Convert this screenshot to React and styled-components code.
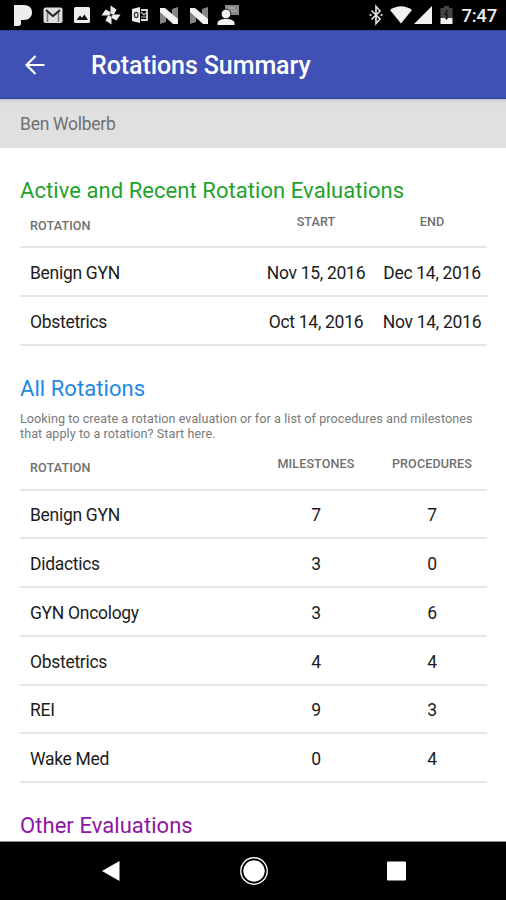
import React from "react";
import styled, { createGlobalStyle } from "styled-components";

const GlobalStyle = createGlobalStyle`
  * {
    box-sizing: border-box;
  }
  body {
    margin: 0;
    font-family: Roboto, "Noto Sans", sans-serif;
    background: #fff;
  }
`;

const Screen = styled.div`
  width: 506px;
  height: 900px;
  display: flex;
  flex-direction: column;
  overflow: hidden;
`;

const StatusBar = styled.div`
  height: 30px;
  flex: none;
  display: flex;
  justify-content: space-between;
  align-items: center;
  padding: 0 9px 0 13px;
  background: #000;
  color: #eee;
`;

const IconGroup = styled.div`
  display: flex;
  align-items: center;
`;

const StatusIcon = styled.svg`
  display: block;
  height: 24px;
  width: ${(props) => props.$width}px;
  margin-right: ${(props) => props.$gap || 0}px;
`;

const Clock = styled.span`
  font-size: 18.5px;
  font-weight: 500;
  line-height: 24px;
  letter-spacing: -0.2px;
  padding-top: 2px;
`;

const AppBar = styled.header`
  height: 69px;
  flex: none;
  display: flex;
  align-items: center;
  padding: 0 25px;
  background: #3f51b5;
  border-top: 1px solid #33439b;
  border-bottom: 1px solid #2c419f;
`;

const BackArrow = styled.svg`
  width: 20px;
  height: 20px;
  margin-right: 46px;
`;

const Title = styled.h1`
  margin: 0;
  padding-top: 3px;
  color: #fff;
  font-size: 25px;
  font-weight: 500;
  line-height: 30px;
  letter-spacing: -0.08px;
`;

const UserBar = styled.div`
  height: 49px;
  flex: none;
  padding: 0 20px;
  color: #707070;
  font-size: 17.5px;
  line-height: 50px;
  letter-spacing: -0.27px;
  background: linear-gradient(#c8c8c8, #dedede 4px, #e0e0e0 8px);
`;

const Content = styled.main`
  flex: 1;
  min-height: 0;
  overflow: hidden;
  padding: 29px 19px 0 20px;
  border-bottom: 1px solid #8a8a8a;
`;

const Section = styled.section`
  margin-bottom: 29px;
`;

const Heading = styled.h2`
  margin: 0;
  color: ${(props) => props.$color};
  font-size: 22px;
  font-weight: 400;
  line-height: 28px;
  letter-spacing: 0.06px;
  white-space: nowrap;
`;

const Hint = styled.p`
  margin: 8px 0 1px;
  color: #7a7a7a;
  font-size: 12.6px;
  line-height: 15px;
  letter-spacing: 0.06px;
  white-space: nowrap;
`;

const TableRow = styled.div`
  display: grid;
  grid-template-columns: 1fr 110px 110px;
  column-gap: 6px;
  align-items: center;
  height: 48.75px;
  padding: 3px 0 0 10px;
  color: #1c1c1c;
  font-size: 17.5px;
  letter-spacing: -0.3px;
  white-space: nowrap;
  border-bottom: 2px solid #e6e6e6;
`;

const TableHead = styled(TableRow)`
  height: ${(props) => props.$height}px;
  align-items: start;
  padding-top: 0;
  color: #707070;
  font-size: 12.6px;
  font-weight: 500;
  line-height: 16px;
  letter-spacing: 0.1px;
`;

const HeadName = styled.span`
  padding-top: ${(props) => props.$top + 4}px;
`;

const HeadCell = styled.span`
  padding-top: ${(props) => props.$top}px;
  text-align: center;
`;

const Cell = styled.span`
  text-align: center;
`;

const NavBar = styled.nav`
  height: 58px;
  flex: none;
  display: flex;
  justify-content: space-between;
  align-items: center;
  padding: 0 95px 0 96px;
  background: #000;
`;

const NavIcon = styled.svg`
  width: 30px;
  height: 30px;
  fill: #fff;
`;

const active = [
  ["Benign GYN", "Nov 15, 2016", "Dec 14, 2016"],
  ["Obstetrics", "Oct 14, 2016", "Nov 14, 2016"],
];

const rotations = [
  ["Benign GYN", 7, 7],
  ["Didactics", 3, 0],
  ["GYN Oncology", 3, 6],
  ["Obstetrics", 4, 4],
  ["REI", 9, 3],
  ["Wake Med", 0, 4],
];

const Nougat = ({ gap }) => (
  <StatusIcon $width={20} $gap={gap} viewBox="0 0 20 24">
    <path d="M1 5l6 3v11l-6 2zM19 4l-6 2v10l6 4z" fill="#858585" />
    <path d="M1 5h5l13 11v5h-5L1 9z" fill="#f2f2f2" />
  </StatusIcon>
);

const Notifications = () => (
  <IconGroup>
    <StatusIcon $width={20} $gap={10} viewBox="0 0 20 24">
      <path
        d="M1 2h10c5 0 8 3 8 7.300c0 4.700-3 7.700-8 7.700H8v3.500c0 1.500-1 2.500-2.500 2.500H1z"
        fill="#eee"
      />
    </StatusIcon>
    <StatusIcon $width={20} $gap={11} viewBox="0 0 20 24">
      <rect x="0.500" y="4.500" width="19" height="15.500" rx="2" fill="#ddd" />
      <path d="M4.500 19V9l5.500 4.500L15.500 9v10" fill="none" stroke="#777" strokeWidth="1.500" />
      <path d="M3 7l7 6 7-6" fill="none" stroke="#222" strokeWidth="1.800" />
    </StatusIcon>
    <StatusIcon $width={16} $gap={11} viewBox="0 0 16 24">
      <rect x="0" y="4" width="16" height="16" rx="1.500" fill="#eee" />
      <path d="M2.500 17l3.500-4.500 2 2.300 2.500-3.300 3.500 5.500z" fill="#111" />
    </StatusIcon>
    <StatusIcon $width={20} $gap={11} viewBox="0 0 20 24" fill="#eee">
      <path d="M9.500 11V2.500l6 4-2.500 5z" />
      <path d="M11 11.500h8.500l-4 6-5-2.500z" />
      <path d="M10.500 13v8.500l-6-4 2.500-5z" />
      <path d="M9 12.500H.5l4-6 5 2.500z" />
      <circle cx="10" cy="12" r="1.500" fill="#333" />
    </StatusIcon>
    <StatusIcon $width={16} $gap={11} viewBox="0 0 16 24">
      <path d="M0 6l8-2v16l-8-2z" fill="#eee" />
      <path d="M9 7h6v10H9" fill="none" stroke="#ddd" strokeWidth="1.800" />
      <path d="M9 9l3 3 3-3M9 14h5" fill="none" stroke="#ccc" strokeWidth="1.200" />
      <ellipse cx="4.200" cy="12" rx="1.800" ry="2.600" fill="none" stroke="#333" strokeWidth="1.200" />
    </StatusIcon>
    <Nougat gap={10} />
    <Nougat gap={8} />
    <StatusIcon $width={22} viewBox="0 0 22 24">
      <rect x="8" y="2" width="14" height="10" fill="#888" />
      <path d="M11 5h7M14 8h6" stroke="#bbb" strokeWidth="1.200" />
      <circle cx="9" cy="11" r="4.800" fill="#f2f2f2" stroke="#000" strokeWidth="0.800" />
      <path d="M0.500 22v-2c0-2.500 4-4 8.500-4s8.500 1.500 8.500 4v2z" fill="#f2f2f2" />
    </StatusIcon>
  </IconGroup>
);

const SystemStatus = () => (
  <IconGroup>
    <StatusIcon $width={14} $gap={7} viewBox="0 0 14 24">
      <path
        d="M2.500 7.500l8.500 8.500-4 4.500v-17L11 8l-8.500 8.500"
        fill="none"
        stroke="#ddd"
        strokeWidth="1.700"
      />
      <path d="M0.500 11h2v2h-2zM11.500 11h2v2h-2z" fill="#ccc" />
    </StatusIcon>
    <StatusIcon $width={22} $gap={2} viewBox="0 0 22 24">
      <path d="M0 7Q11-.500 22 7L11 20.500z" fill="#f2f2f2" />
    </StatusIcon>
    <StatusIcon $width={18} $gap={8} viewBox="0 0 18 24">
      <path d="M18 3v18H0z" fill="#f2f2f2" />
    </StatusIcon>
    <StatusIcon $width={13} $gap={8} viewBox="0 0 13 24">
      <path d="M4 3h5v2h3.500v10H.500V5H4z" fill="#444" />
      <path d="M7.500 7L5 11.500h2v3" fill="none" stroke="#111" strokeWidth="1.500" />
      <path d="M.500 15H5l1.500 2L8 15h4.500v6H.500z" fill="#f2f2f2" />
    </StatusIcon>
    <Clock>7:47</Clock>
  </IconGroup>
);

const Table = ({ columns, rows, headHeight, headTop }) => (
  <div>
    <TableHead $height={headHeight}>
      <HeadName $top={headTop}>ROTATION</HeadName>
      {columns.map((column) => (
        <HeadCell key={column} $top={headTop}>
          {column}
        </HeadCell>
      ))}
    </TableHead>
    {rows.map(([name, first, second]) => (
      <TableRow key={name}>
        <span>{name}</span>
        <Cell>{first}</Cell>
        <Cell>{second}</Cell>
      </TableRow>
    ))}
  </div>
);

const App = () => (
  <>
    <GlobalStyle />
    <Screen>
      <StatusBar>
        <Notifications />
        <SystemStatus />
      </StatusBar>
      <AppBar>
        <BackArrow viewBox="0 0 20 20" fill="none" stroke="#fff" strokeWidth="2.200">
          <path d="M19.500 10H2M10.500 1L1.500 10l9 9" />
        </BackArrow>
        <Title>Rotations Summary</Title>
      </AppBar>
      <UserBar>Ben Wolberb</UserBar>
      <Content>
        <Section>
          <Heading $color="#22a22b">Active and Recent Rotation Evaluations</Heading>
          <Table columns={["START", "END"]} rows={active} headHeight={43} headTop={9} />
        </Section>
        <Section>
          <Heading $color="#1e88e5">All Rotations</Heading>
          <Hint>
            Looking to create a rotation evaluation or for a list of procedures and milestones
            <br />
            that apply to a rotation? Start here.
          </Hint>
          <Table
            columns={["MILESTONES", "PROCEDURES"]}
            rows={rotations}
            headHeight={49}
            headTop={14}
          />
        </Section>
        <Heading $color="#8e14a4">Other Evaluations</Heading>
      </Content>
      <NavBar>
        <NavIcon viewBox="0 0 30 30">
          <path d="M6 15L23.500 5v20z" />
        </NavIcon>
        <NavIcon viewBox="0 0 30 30">
          <circle cx="15" cy="15" r="11" />
          <circle cx="15" cy="15" r="13.200" fill="none" stroke="#fff" strokeWidth="1.400" />
          <circle cx="15" cy="15" r="11.500" fill="none" stroke="#000" strokeWidth="1.500" />
        </NavIcon>
        <NavIcon viewBox="0 0 30 30">
          <rect x="6" y="5.500" width="19" height="19" rx="1" />
        </NavIcon>
      </NavBar>
    </Screen>
  </>
);

export default App;
